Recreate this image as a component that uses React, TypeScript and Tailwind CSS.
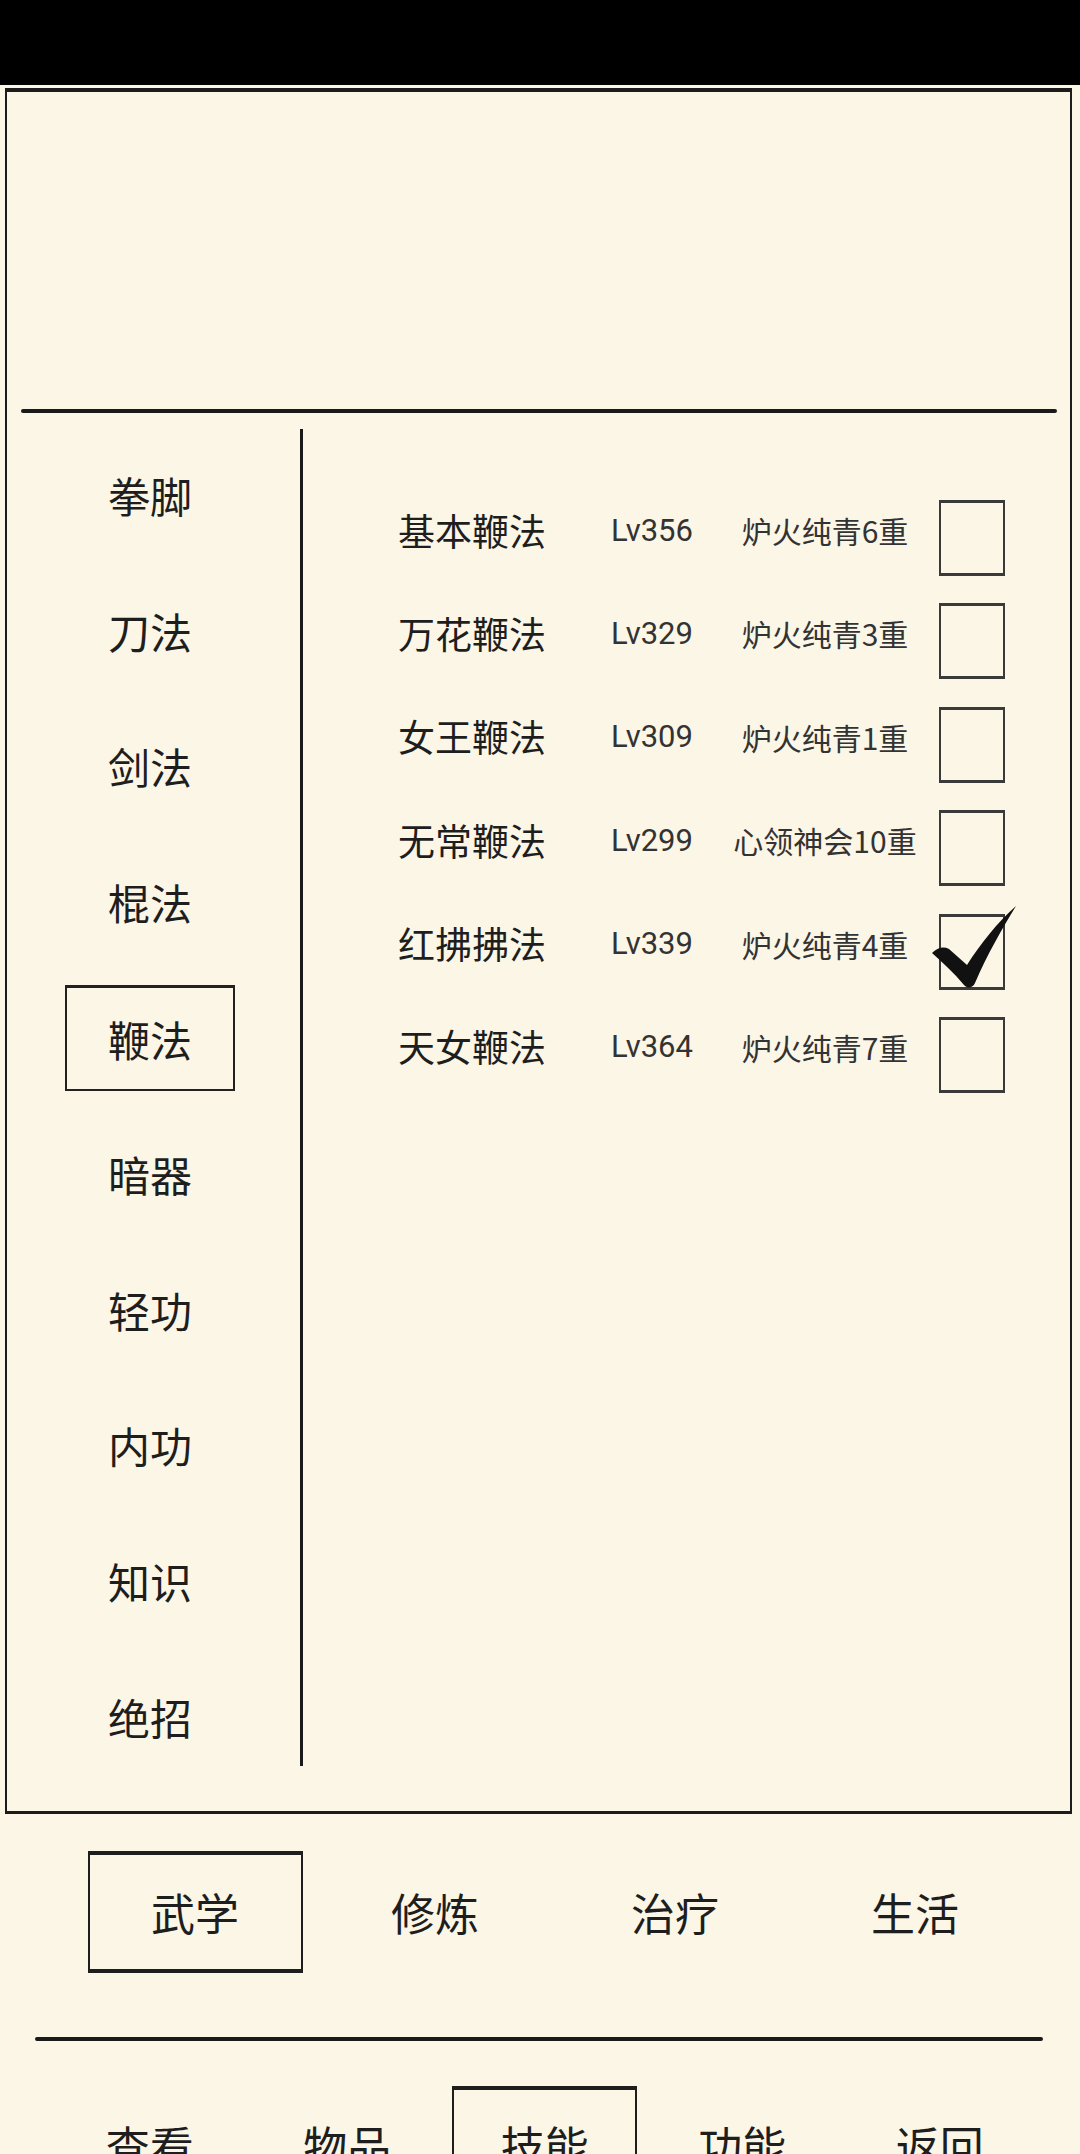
import React from 'react'

const menu = ['拳脚', '刀法', '剑法', '棍法', '鞭法', '暗器', '轻功', '内功', '知识', '绝招']

const skills = [
  { name: '基本鞭法', lv: 'Lv356', stage: '炉火纯青6重', checked: false },
  { name: '万花鞭法', lv: 'Lv329', stage: '炉火纯青3重', checked: false },
  { name: '女王鞭法', lv: 'Lv309', stage: '炉火纯青1重', checked: false },
  { name: '无常鞭法', lv: 'Lv299', stage: '心领神会10重', checked: false },
  { name: '红拂拂法', lv: 'Lv339', stage: '炉火纯青4重', checked: true },
  { name: '天女鞭法', lv: 'Lv364', stage: '炉火纯青7重', checked: false },
]

const tabs = ['武学', '修炼', '治疗', '生活']

const nav = [
  { label: '查看' },
  { label: '物品' },
  { label: '技能', active: true },
  { label: '功能' },
  { label: '返回' },
]

// brush style tick drawn over the box
function Tick() {
  return (
    <svg viewBox="0 0 90 90" className="absolute -left-[12px] -top-[14px] w-[90px] h-[90px]">
      <path
        d="M3 50 C8 45 14 43 20 46 L38 62 C52 40 68 20 87 3 C74 24 58 52 46 80 C44 85 38 86 35 82 C25 70 14 60 3 50 Z"
        fill="#111"
      />
    </svg>
  )
}

export default function App() {
  return (
    <div className="w-[1080px] h-[2154px] overflow-hidden flex flex-col bg-[#fcf6e7] text-[#1e1e1e] font-['Noto_Sans_CJK_SC',sans-serif]">
      {/* status bar */}
      <div className="h-[85px] bg-black shrink-0"></div>

      {/* main panel */}
      <div className="mt-[3px] ml-[5px] w-[1067px] h-[1726px] shrink-0 flex flex-col border-t-[4px] border-x-2 border-b-[3px] border-[#1c1c1c]">
        <div className="h-[317px] shrink-0"></div>
        <div className="ml-[14px] mr-[13px] h-[4px] bg-[#1a1a1a] rounded-full shrink-0"></div>

        <div className="flex flex-1">
          {/* category menu */}
          <div className="w-[286px] pt-[14px] flex flex-col">
            {menu.map((m) => (
              <div key={m} className="h-[135.8px] flex items-center justify-center">
                {m === '鞭法' ? (
                  <div className="w-[170px] h-[106px] border-2 border-t-[3px] border-[#222] flex items-center justify-center">
                    <span className="text-[42px] leading-none">{m}</span>
                  </div>
                ) : (
                  <span className="text-[42px] leading-none">{m}</span>
                )}
              </div>
            ))}
          </div>

          <div className="w-[3px] ml-[7px] mt-[16px] h-[1337px] bg-[#1a1a1a]"></div>

          {/* skill list */}
          <div className="flex-1 pt-[87px] flex flex-col gap-[27.4px]">
            {skills.map((s) => (
              <div key={s.name} className="flex items-center h-[76px]">
                <div className="flex items-center pb-[16px]">
                  <span className="ml-[95px] w-[213px] text-[37px] leading-none">{s.name}</span>
                  <span className="w-[119px] text-[31px] leading-none text-[#333] font-['Roboto',sans-serif]">{s.lv}</span>
                  <span className="w-[190px] text-center text-[30px] leading-none text-[#333] whitespace-nowrap">{s.stage}</span>
                </div>
                <div className="relative ml-[19px] w-[66px] h-[76px] border-2 border-t-[3px] border-b-[3px] border-[#3a3a3a]">
                  {s.checked && <Tick />}
                </div>
              </div>
            ))}
          </div>
        </div>
      </div>

      {/* sub tabs */}
      <div className="mt-[37px] pl-[75px] flex shrink-0">
        {tabs.map((t, i) => (
          <div key={t} className="w-[240px] h-[122px] flex items-center justify-center">
            {i === 0 ? (
              <div className="w-[215px] h-[122px] border-2 border-t-[4px] border-b-[4px] border-[#1e1e1e] flex items-center justify-center">
                <span className="text-[44px] leading-none">{t}</span>
              </div>
            ) : (
              <span className="text-[44px] leading-none">{t}</span>
            )}
          </div>
        ))}
      </div>

      <div className="mt-[64px] ml-[35px] w-[1008px] h-[4px] bg-[#1a1a1a] rounded-full shrink-0"></div>

      {/* bottom nav */}
      <div className="mt-[45px] pl-[51px] flex shrink-0">
        {nav.map((n) => (
          <div key={n.label} className="w-[197.5px] flex justify-center">
            {n.active ? (
              <div className="w-[185px] h-[120px] border-x-2 border-t-[4px] border-[#1e1e1e] flex justify-center pt-[33px]">
                <span className="text-[44px] leading-none">{n.label}</span>
              </div>
            ) : (
              <div className="h-[120px] flex justify-center pt-[37px]">
                <span className="text-[44px] leading-none">{n.label}</span>
              </div>
            )}
          </div>
        ))}
      </div>
    </div>
  )
}
